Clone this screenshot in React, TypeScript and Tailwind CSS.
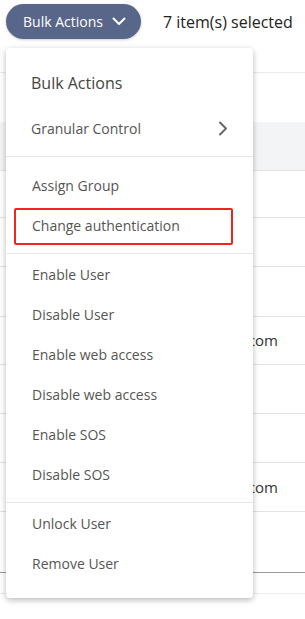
const font = { fontFamily: '"Open Sans", "Noto Sans", sans-serif' };

const groups: string[][] = [
  ["Assign Group", "Change authentication"],
  ["Enable User", "Disable User", "Enable web access", "Disable web access", "Enable SOS", "Disable SOS"],
  ["Unlock User", "Remove User"],
];

const rows = [
  { h: "h-[48px]", email: "" },
  { h: "h-[49px]", email: "" },
  { h: "h-[50px]", email: "" },
  { h: "h-[48px]", email: "j.smith@example.com" },
  { h: "h-[49px]", email: "" },
  { h: "h-[49px]", email: "" },
  { h: "h-[49px]", email: "m.lee@example.com" },
  { h: "h-[60px]", email: "" },
];

function MenuItem({ label, boxed }: { label: string; boxed?: boolean }) {
  return (
    <div className="relative h-10 flex items-center pl-[26px] text-[14px] text-[#555]">
      {label}
      {boxed && (
        <div className="absolute left-[8px] right-[20px] top-[3px] bottom-0 border-2 border-[#f52222] rounded-[2px]" />
      )}
    </div>
  );
}

export default function App() {
  return (
    <div className="relative h-[619px] w-[305px] overflow-hidden bg-white" style={font}>
      {/* top bar */}
      <div className="flex pt-[4px] h-[72px] items-start">
        <div className="flex items-center">
          <button className="ml-[6px] h-[35px] w-[135px] rounded-full bg-[#58668a] text-white text-[14px] flex items-center pl-[17px] gap-[9px] shadow-[0_1px_3px_rgba(0,0,0,0.2)]">
            Bulk Actions
            <svg width="14" height="9" viewBox="0 0 14 9" fill="none">
              <path d="M1.5 1.5 L7 7 L12.5 1.5" stroke="white" strokeWidth="2" strokeLinecap="round" strokeLinejoin="round" />
            </svg>
          </button>
          <span className="ml-[22px] text-[16px] text-[#222]">7 item(s) selected</span>
        </div>
      </div>

      {/* table behind */}
      <div className="border-t border-[#ebebeb]">
        <div className="h-[49px]" />
        <div className="h-[48px] bg-[#f3f4f6]" />
        {rows.map((r, i) => (
          <div
            key={i}
            className={`${r.h} flex items-center justify-end pr-[27px] text-[15px] text-[#333] ${i === rows.length - 1 ? "" : "border-b border-[#e2e2e2]"} ${i === 0 ? "border-t border-[#e2e2e2]" : ""}`}
          >
            {r.email}
          </div>
        ))}
        <div className="h-[21px] border-t border-[#999]" />
        <div className="border-t border-[#eeeeee]" />
      </div>

      {/* dropdown menu */}
      <div className="absolute left-[6px] top-[48px] w-[247px] h-[550px] bg-white rounded-[4px] shadow-[0_2px_6px_rgba(0,0,0,0.28)] pt-[8px]">
        <div className="h-[52px] flex items-center pl-[25px] pt-[2px] text-[16px] text-[#444]">Bulk Actions</div>
        <div className="h-10 flex items-center justify-between pl-[25px] pr-[25px] text-[14px] text-[#555]">
          Granular Control
          <svg width="10" height="15" viewBox="0 0 10 15" fill="none">
            <path d="M2 1.5 L8 7.5 L2 13.5" stroke="#666" strokeWidth="2" strokeLinecap="round" strokeLinejoin="round" />
          </svg>
        </div>
        {groups.map((g, gi) => (
          <div key={gi} className={`border-t border-[#e6e6e6] mt-[8px] ${gi === 0 ? "pt-[8px]" : ""}`}>
            {g.map((label) => (
              <MenuItem key={label} label={label} boxed={label === "Change authentication"} />
            ))}
          </div>
        ))}
      </div>
    </div>
  );
}
